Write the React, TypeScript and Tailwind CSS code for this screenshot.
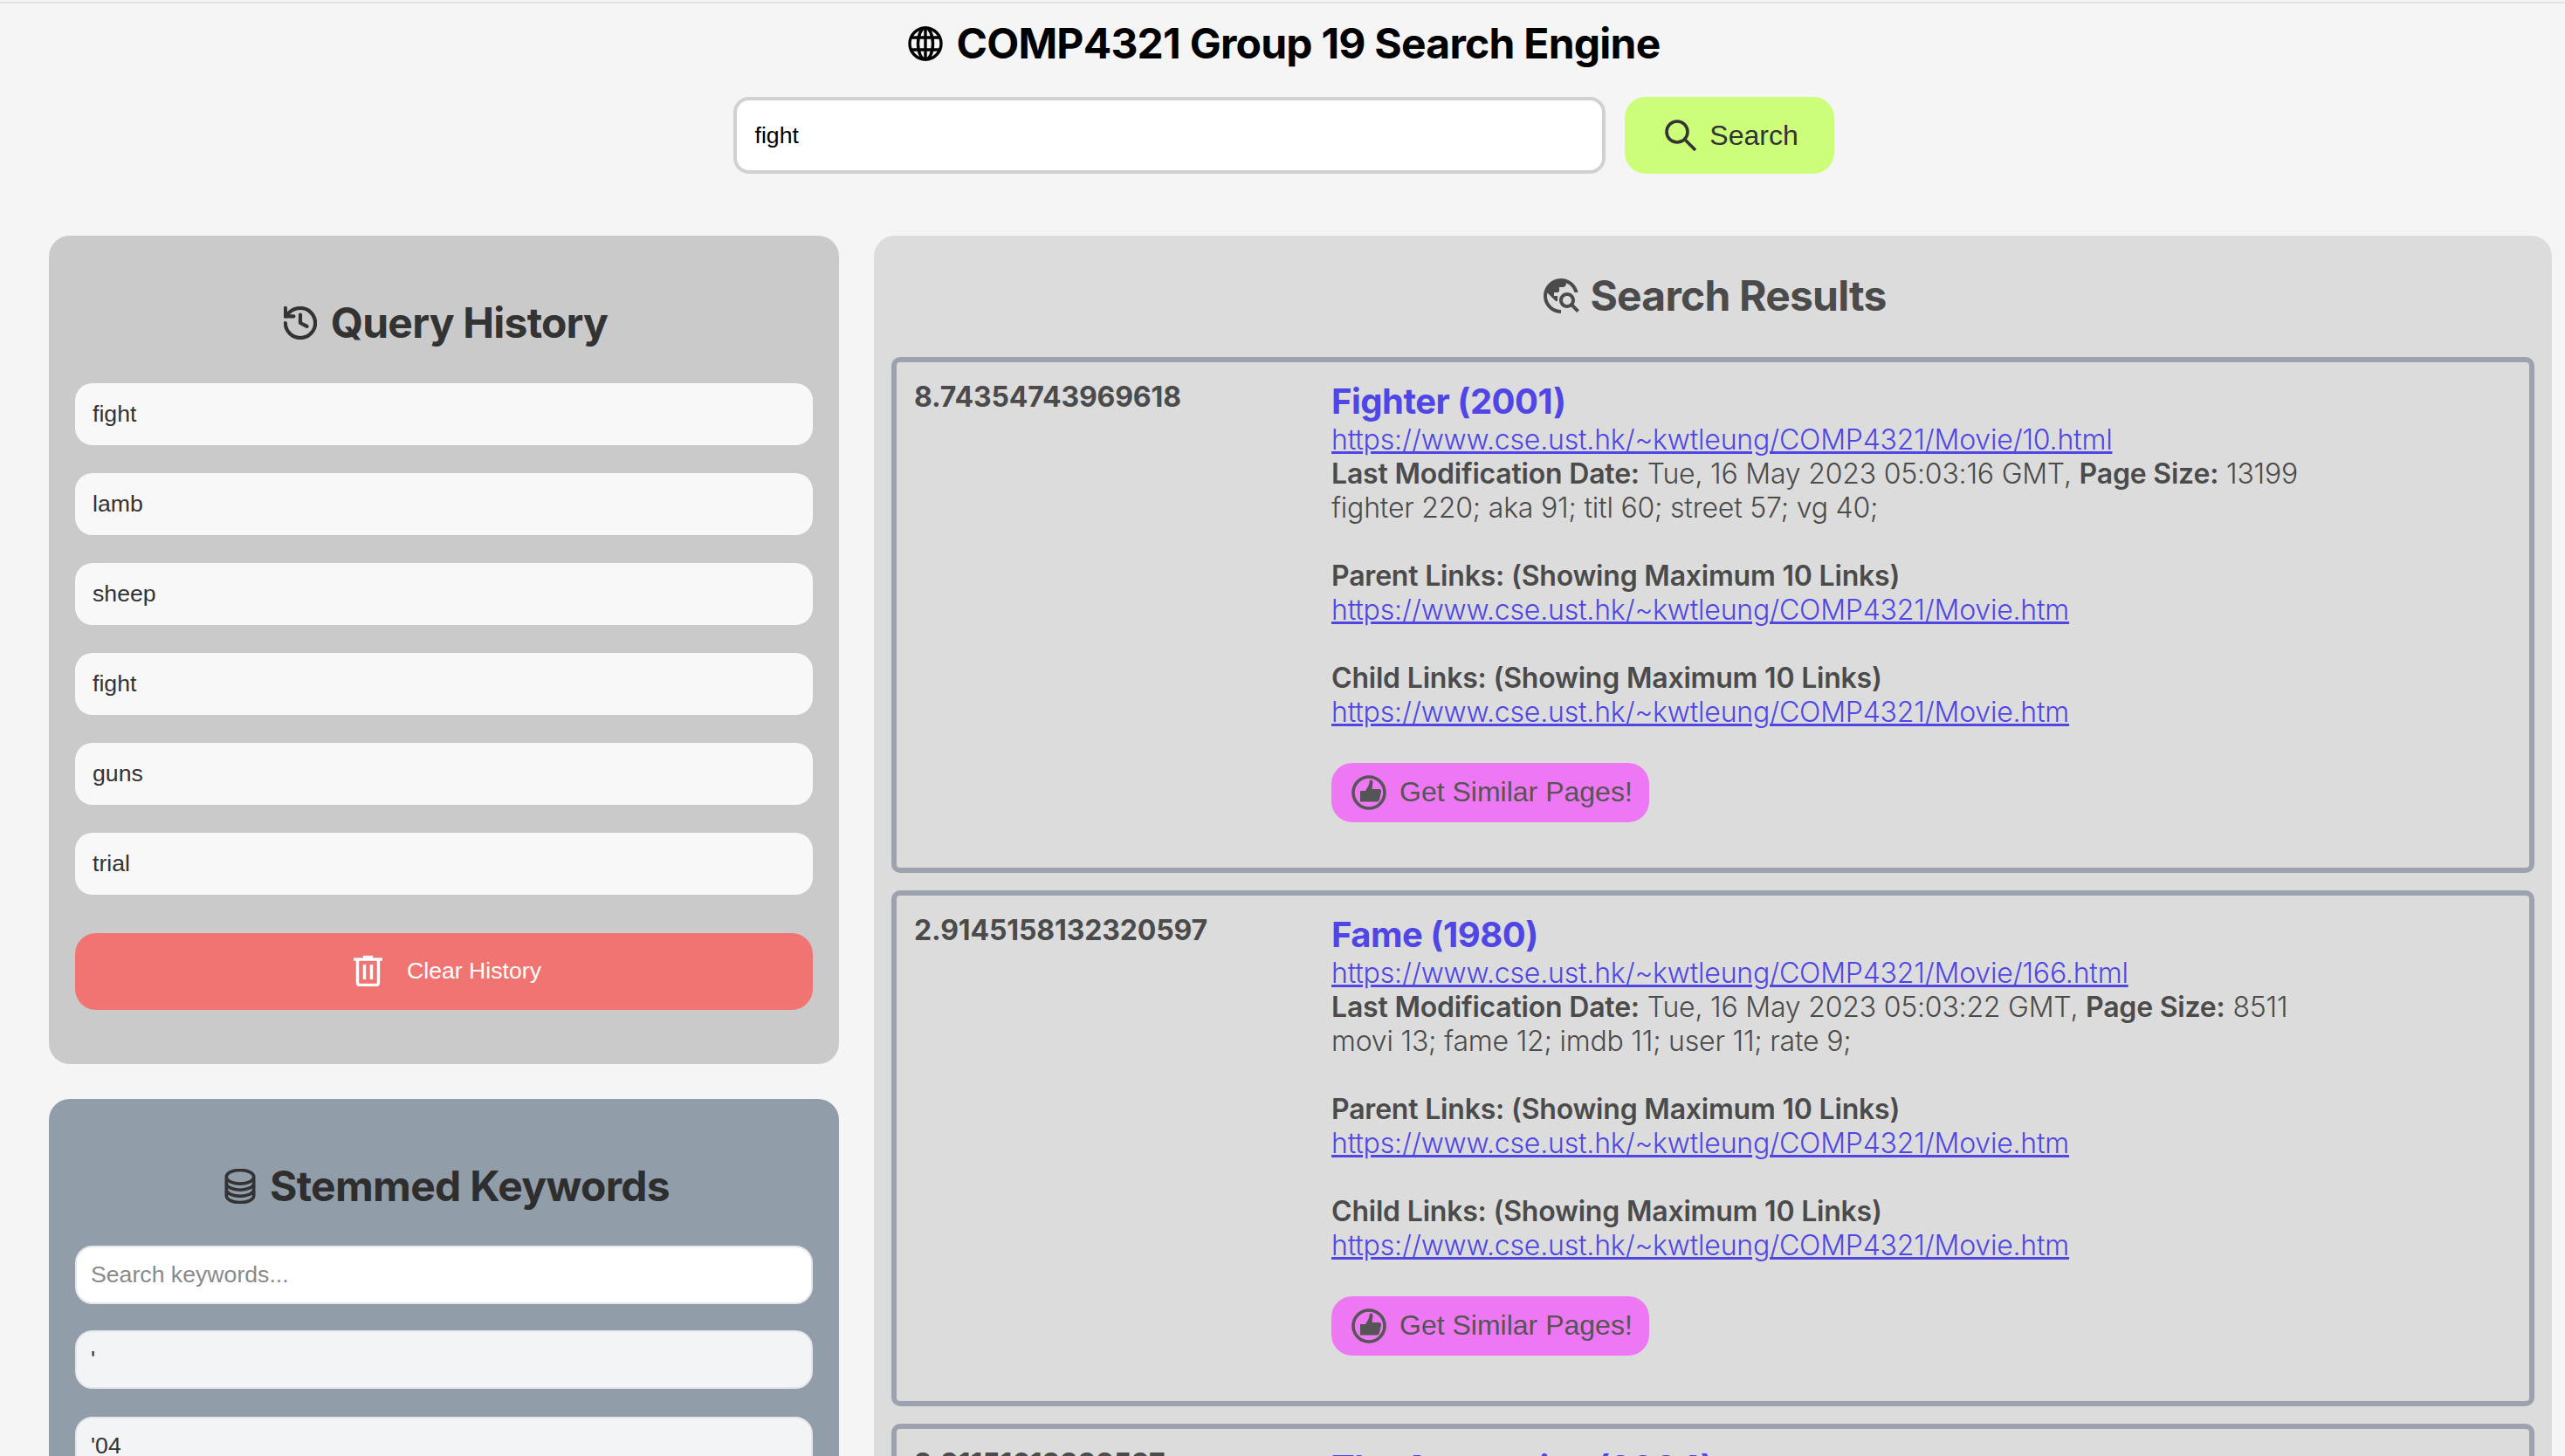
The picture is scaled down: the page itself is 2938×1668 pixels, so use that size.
import { MdTravelExplore } from "react-icons/md";

const sans = "[font-family:'Liberation_Sans',Arial,sans-serif]";

function GlobeIcon() {
  return (
    <svg viewBox="0 0 40 40" className="w-[40px] h-[40px] shrink-0" fill="none" stroke="#000" strokeWidth="3.4">
      <circle cx="20" cy="20" r="18" />
      <ellipse cx="20" cy="20" rx="8.5" ry="18" />
      <path d="M20 2v36M4 13h32M4 27h32" />
    </svg>
  );
}

function SearchIcon() {
  return (
    <svg viewBox="0 0 36 36" className="w-[36px] h-[36px] shrink-0" fill="none" stroke="#333" strokeWidth="3.6">
      <circle cx="14" cy="14" r="12" />
      <path d="M22.5 22.5 35 35" />
    </svg>
  );
}

function HistoryIcon() {
  return (
    <svg viewBox="2 2 20 20" className="w-[38px] h-[38px] shrink-0" fill="none" stroke="#333" strokeWidth="2.2" strokeLinecap="round" strokeLinejoin="round">
      <path d="M3 12a9 9 0 1 0 9-9 9.75 9.75 0 0 0-6.74 2.74L3 8" />
      <path d="M3 3v5h5" />
      <path d="M12 7v5l4 2" />
    </svg>
  );
}

function DatabaseIcon() {
  return (
    <svg viewBox="3 1.5 18 21" className="w-[36px] h-[40px] shrink-0" fill="none" stroke="#333" strokeWidth="1.9" strokeLinecap="round" strokeLinejoin="round">
      <path d="M20.25 6.375c0 2.278-3.694 4.125-8.25 4.125S3.75 8.653 3.75 6.375m16.5 0c0-2.278-3.694-4.125-8.25-4.125S3.75 4.097 3.75 6.375m16.5 0v11.25c0 2.278-3.694 4.125-8.25 4.125s-8.25-1.847-8.25-4.125V6.375m16.5 0v3.75m-16.5-3.75v3.75m16.5 0v3.75C20.25 16.153 16.556 18 12 18s-8.25-1.847-8.25-4.125v-3.75m16.5 0c0 2.278-3.694 4.125-8.25 4.125s-8.25-1.847-8.25-4.125" />
    </svg>
  );
}

function TrashIcon() {
  return (
    <svg viewBox="0 0 33 36" className="w-[33px] h-[36px] shrink-0" fill="none" stroke="#fff" strokeWidth="3.4">
      <path d="M0 5h33" />
      <path d="M11 2.5h11" />
      <path d="M4.500 5v27a2.500 2.500 0 0 0 2.500 2.500h19a2.500 2.500 0 0 0 2.500-2.500V5" />
      <path d="M12.500 11v17M20.500 11v17" />
    </svg>
  );
}

function ThumbIcon() {
  return (
    <svg viewBox="0 0 40 40" className="w-[40px] h-[40px] shrink-0">
      <circle cx="20" cy="20" r="18" fill="none" stroke="#555" strokeWidth="3.6" />
      <path d="M10 18h6l3-5q1.500-3 2-7.500q3.500-.5 3.500 3l-1 7.500h8q3 0 2.500 3l-2 9q-.5 2.500-3 2.500H10z" fill="#555" />
    </svg>
  );
}

const history = ["fight", "lamb", "sheep", "fight", "guns", "trial"];

type Result = {
  score: string;
  title: string;
  url: string;
  date: string;
  size: string;
  words: string;
};

const results: Result[] = [
  {
    score: "8.74354743969618",
    title: "Fighter (2001)",
    url: "https://www.cse.ust.hk/~kwtleung/COMP4321/Movie/10.html",
    date: "Tue, 16 May 2023 05:03:16 GMT",
    size: "13199",
    words: "fighter 220; aka 91; titl 60; street 57; vg 40;",
  },
  {
    score: "2.9145158132320597",
    title: "Fame (1980)",
    url: "https://www.cse.ust.hk/~kwtleung/COMP4321/Movie/166.html",
    date: "Tue, 16 May 2023 05:03:22 GMT",
    size: "8511",
    words: "movi 13; fame 12; imdb 11; user 11; rate 9;",
  },
];

const parent = "https://www.cse.ust.hk/~kwtleung/COMP4321/Movie.htm";

function LinkLine({ href }: { href: string }) {
  return (
    <a href="#" className="block underline text-[#4f46e5] font-light">
      {href}
    </a>
  );
}

function ResultCard({ r }: { r: Result }) {
  return (
    <div className="mx-[20px] mb-[20px] border-[6px] border-[#9ca3af] rounded-[10px] pl-[21px] pr-[21px] pt-[20px] pb-[52px] flex text-[32px] leading-[39px] text-[#4b4b4b]">
      <div className="w-[477px] shrink-0 font-bold tracking-[-0.13px] -ml-[1px] mr-[1px]">{r.score}</div>
      <div className="flex-1 min-w-0 font-light tracking-[-0.2px]">
        <div className="text-[40px] leading-[49px] font-bold text-[#4f46e5] tracking-[-0.5px]">{r.title}</div>
        <LinkLine href={r.url} />
        <div>
          <span className="font-semibold">Last Modification Date:</span> {r.date}, <span className="font-semibold">Page Size:</span> {r.size}
        </div>
        <div>{r.words}</div>
        <div className="h-[39px]" />
        <div className="font-semibold">Parent Links: (Showing Maximum 10 Links)</div>
        <LinkLine href={parent} />
        <div className="h-[39px]" />
        <div className="font-semibold">Child Links: (Showing Maximum 10 Links)</div>
        <LinkLine href={parent} />
        <button className={`mt-[39px] h-[68px] w-[364px] rounded-[24px] bg-[#ee77f3] flex items-center gap-[15px] pl-[23px] pb-[1px] text-[32px] tracking-normal text-[#555] ${sans}`}>
          <ThumbIcon />
          Get Similar Pages!
        </button>
      </div>
    </div>
  );
}

export default function App() {
  return (
    <div className="h-[1668px] overflow-hidden bg-[#f5f5f5] [font-family:Inter,sans-serif]">
      <div className="pt-[2px]">
        <div className="h-[2px] bg-[#e3e3e3]" />
      </div>
      <div className="flex items-center justify-center gap-[15px] h-[92px] pl-[4px]">
        <GlobeIcon />
        <h1 className="text-[48px] leading-[58px] font-bold text-black tracking-[-0.76px]">COMP4321 Group 19 Search Engine</h1>
      </div>
      <div className="flex justify-center gap-[22px] mt-[15px] pl-[2px]">
        <div className={`w-[999px] h-[88px] border-[4px] border-[#d1d1d1] rounded-[18px] bg-white flex items-center pl-[21px] text-[26.67px] text-black ${sans}`}>
          fight
        </div>
        <button className={`w-[240px] h-[88px] rounded-[24px] bg-[#ccfe7a] flex items-center justify-center gap-[15px] pl-[6px] text-[32px] text-[#333] ${sans}`}>
          <SearchIcon />
          Search
        </button>
      </div>
      <div className="flex gap-[40px] pl-[56px] pr-[15px] mt-[71px]">
        <div className="w-[905px] shrink-0 flex flex-col gap-[40px]">
          <div className="bg-[#cacaca] rounded-[24px] px-[30px] pt-[71px] pb-[62px]">
            <h2 className="flex items-center justify-center gap-[16px] pl-[4px] text-[48px] leading-[58px] font-bold text-[#333] tracking-[-0.8px] mb-[40px]">
              <HistoryIcon />
              Query History
            </h2>
            <div className={`flex flex-col gap-[32px] ${sans}`}>
              {history.map((h, i) => (
                <div key={i} className="h-[71px] rounded-[20px] bg-[#f8f8f8] flex items-center pl-[20px] pb-[2px] text-[26.67px] text-[#333]">
                  {h}
                </div>
              ))}
            </div>
            <button className={`mt-[44px] w-full h-[88px] rounded-[24px] bg-[#f07572] flex items-center justify-center gap-[28px] pl-[8px] pb-[2px] text-[26.67px] text-white ${sans}`}>
              <TrashIcon />
              Clear History
            </button>
          </div>
          <div className="bg-[#929daa] rounded-[24px] px-[30px] pt-[71px] pb-[60px]">
            <h2 className="flex items-center justify-center gap-[16px] pl-[7px] text-[48px] leading-[58px] font-bold text-[#2e2e2e] tracking-[-0.7px] mb-[39px]">
              <DatabaseIcon />
              Stemmed Keywords
            </h2>
            <div className={`flex flex-col gap-[32px] ${sans}`}>
              <div className="h-[67px] -mb-[2px] rounded-[20px] border-[2px] border-[#e5e7eb] bg-white flex items-center pl-[16px] pb-[1px] text-[26.67px] text-[#8a8a8a]">
                Search keywords...
              </div>
              {["'", "'04"].map((k) => (
                <div key={k} className="h-[67px] rounded-[20px] border-[2px] border-[#e5e7eb] bg-[#f3f4f6] flex items-center pl-[16px] pb-[1px] text-[26.67px] text-[#333]">
                  {k}
                </div>
              ))}
            </div>
          </div>
        </div>
        <div className="flex-1 min-w-0 bg-[#dcdcdc] rounded-[24px] pt-[40px]">
          <h2 className="flex items-center justify-center gap-[13px] pl-[5px] text-[48px] leading-[58px] font-bold text-[#4b4b4b] tracking-[-0.8px] mb-[41px]">
            <MdTravelExplore className="w-[48px] h-[48px] -mx-[4px] shrink-0" />
            Search Results
          </h2>
          {results.map((r) => (
            <ResultCard key={r.title} r={r} />
          ))}
          <div className="mx-[20px] border-[6px] border-[#9ca3af] rounded-[10px] pl-[21px] pr-[21px] pt-[20px] h-[300px] flex text-[32px] leading-[39px] text-[#4b4b4b]">
            <div className="w-[477px] shrink-0 font-bold tracking-[-0.13px] -ml-[1px] mr-[1px]">2.91151613338597</div>
            <div className="text-[40px] leading-[49px] font-bold text-[#4f46e5] tracking-[-0.5px]">The Apprentice (2004)</div>
          </div>
        </div>
      </div>
    </div>
  );
}
